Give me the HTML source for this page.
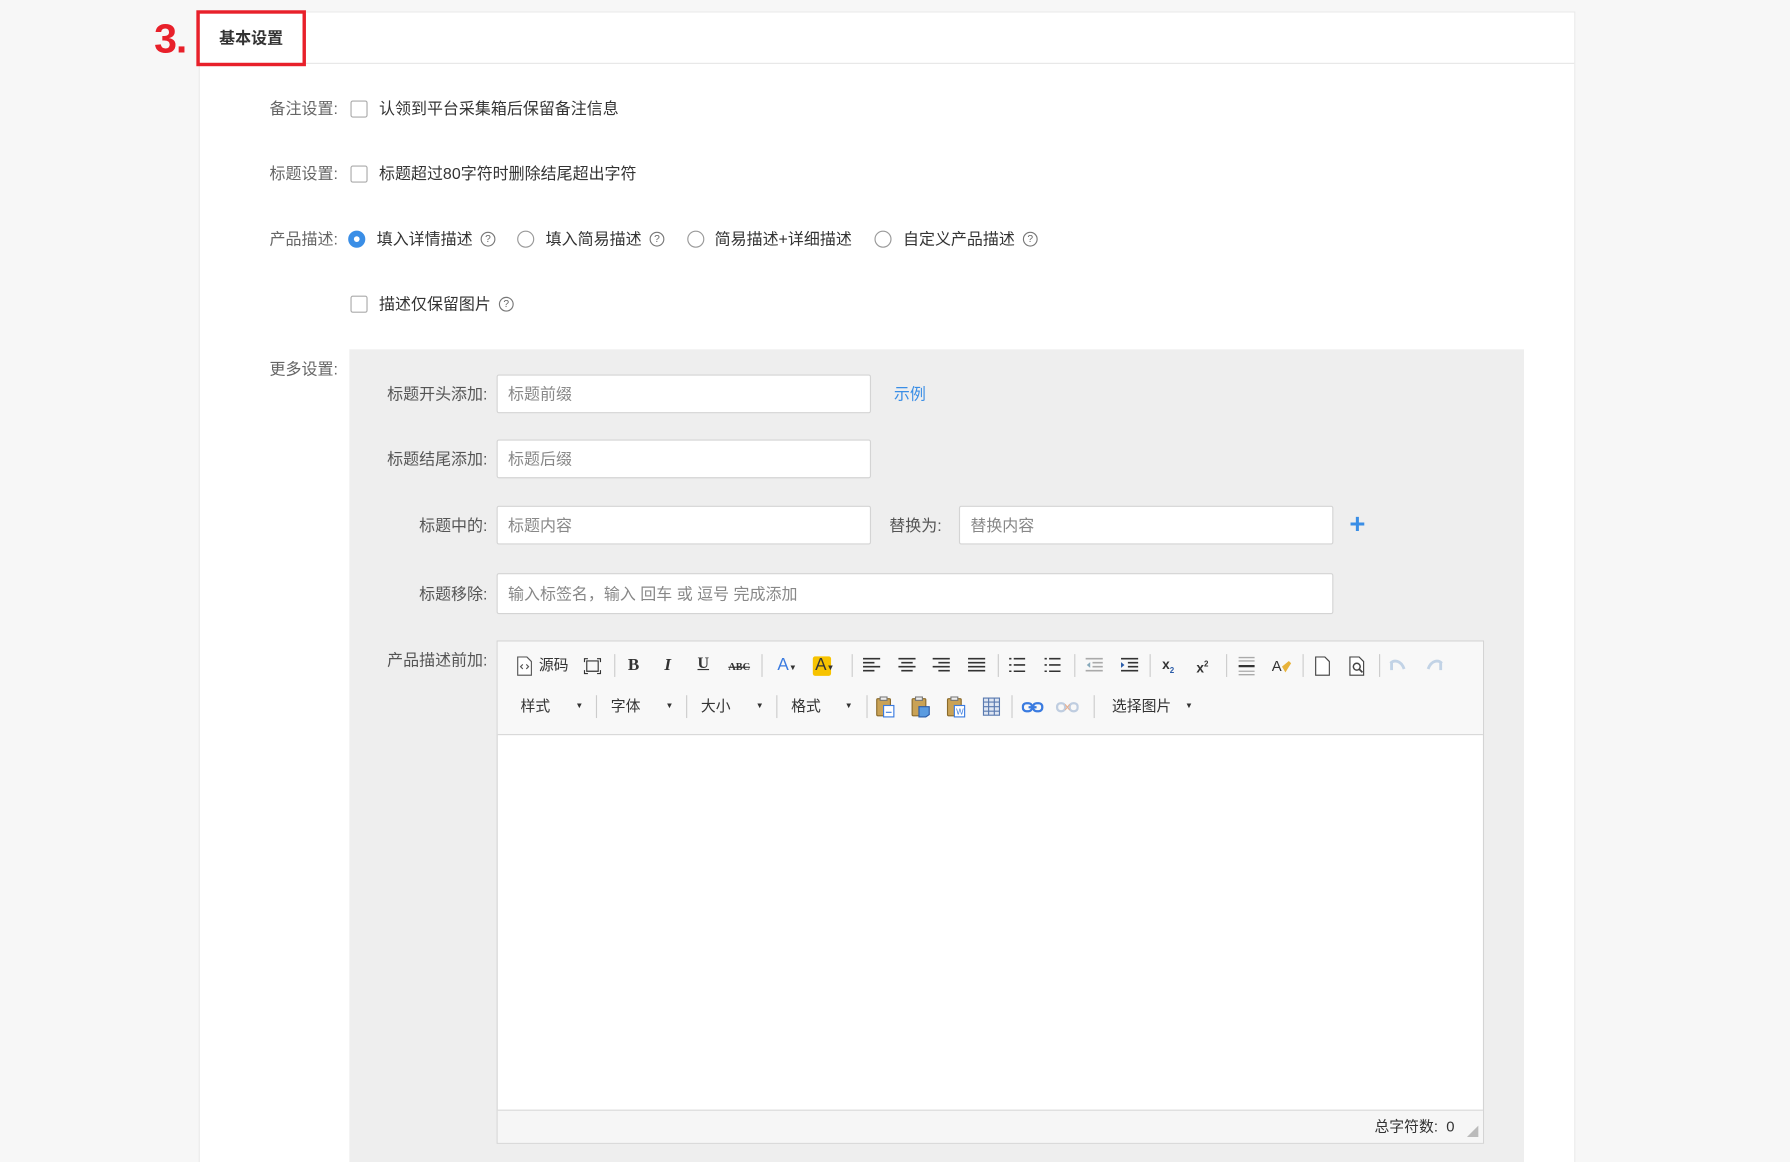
<!DOCTYPE html>
<html><head><meta charset="utf-8"><style>
html,body{margin:0;padding:0;width:1790px;height:1162px;overflow:hidden;background:#f7f7f7}
#w{position:absolute;left:0;top:0;width:1568px;height:1018px;overflow:hidden;transform:scale(1.14158);transform-origin:0 0;font-family:"Liberation Sans","Noto Sans CJK SC",sans-serif;font-size:14px;color:#333}
.a{position:absolute;white-space:nowrap}
.card{left:174px;top:10px;width:1204px;height:1100px;background:#fff;border:1px solid #eaeaea}
.hl{left:174px;top:55px;width:1205px;height:1px;background:#e6e6e6}
.lab{color:#666;text-align:right;width:120px;line-height:20px}
.cb{width:13px;height:13px;border:1px solid #aaa;border-radius:2px;background:#fff}
.rd{width:13px;height:13px;border:1px solid #999;border-radius:50%;background:#fff}
.q{width:11px;height:11px;border:1px solid #777;border-radius:50%;font-size:9px;line-height:11px;text-align:center;color:#666}
.t{line-height:20px}
.inp{background:#fff;border:1px solid #d4d4d4;border-radius:2px;height:34px;box-sizing:border-box;color:#888;line-height:32px;padding-left:9px}
.ilab{color:#555;text-align:right;width:100px;line-height:20px}
.tb{font-size:13px;color:#333;line-height:20px;text-align:center}
.sep{width:1px;height:20px;background:#ccc}
.ic{position:absolute}
</style></head><body><div id="w">
<div class="a card"></div>
<div class="a hl"></div>
<div class="a" style="left:135px;top:12px;font-size:36px;font-weight:bold;color:#e8202a;line-height:44px;letter-spacing:-1px">3.</div>
<div class="a" style="left:172px;top:9px;width:90px;height:43px;border:3px solid #e8202a"></div>
<div class="a" style="left:192px;top:23px;font-weight:bold;line-height:20px;font-size:14px">基本设置</div>

<div class="a lab" style="left:176px;top:85px">备注设置:</div>
<div class="a cb" style="left:307px;top:88px"></div>
<div class="a t" style="left:332px;top:85px">认领到平台采集箱后保留备注信息</div>

<div class="a lab" style="left:176px;top:142px">标题设置:</div>
<div class="a cb" style="left:307px;top:145px"></div>
<div class="a t" style="left:332px;top:142px">标题超过80字符时删除结尾超出字符</div>

<div class="a lab" style="left:176px;top:199px">产品描述:</div>
<div class="a rd" style="left:305px;top:202px;background:#3a8ee6;border-color:#3a8ee6"><div style="position:absolute;left:4px;top:4px;width:5px;height:5px;border-radius:50%;background:#fff"></div></div>
<div class="a t" style="left:330px;top:199px">填入详情描述</div>
<div class="a q" style="left:421px;top:203px">?</div>
<div class="a rd" style="left:453px;top:202px"></div>
<div class="a t" style="left:478px;top:199px">填入简易描述</div>
<div class="a q" style="left:569px;top:203px">?</div>
<div class="a rd" style="left:602px;top:202px"></div>
<div class="a t" style="left:626px;top:199px">简易描述+详细描述</div>
<div class="a rd" style="left:766px;top:202px"></div>
<div class="a t" style="left:791px;top:199px">自定义产品描述</div>
<div class="a q" style="left:896px;top:203px">?</div>

<div class="a cb" style="left:307px;top:259px"></div>
<div class="a t" style="left:332px;top:256px">描述仅保留图片</div>
<div class="a q" style="left:437px;top:260px">?</div>

<div class="a lab" style="left:176px;top:313px">更多设置:</div>
<div class="a" style="left:306px;top:306px;width:1029px;height:780px;background:#eeeeee"></div>

<div class="a ilab" style="left:327px;top:335px">标题开头添加:</div>
<div class="a inp" style="left:435px;top:328px;width:328px">标题前缀</div>
<div class="a t" style="left:783px;top:335px;color:#3a8ee6">示例</div>

<div class="a ilab" style="left:327px;top:392px">标题结尾添加:</div>
<div class="a inp" style="left:435px;top:385px;width:328px">标题后缀</div>

<div class="a ilab" style="left:327px;top:450px">标题中的:</div>
<div class="a inp" style="left:435px;top:443px;width:328px">标题内容</div>
<div class="a t" style="left:779px;top:450px;color:#555">替换为:</div>
<div class="a inp" style="left:840px;top:443px;width:328px">替换内容</div>
<div class="a" style="left:1182px;top:444px;font-size:24px;font-weight:bold;color:#3a8ee6;line-height:32px">+</div>

<div class="a ilab" style="left:327px;top:510px">标题移除:</div>
<div class="a inp" style="left:435px;top:502px;width:733px;height:36px;line-height:34px">输入标签名，输入 回车 或 逗号 完成添加</div>

<div class="a ilab" style="left:327px;top:568px">产品描述前加:</div>
<div class="a" style="left:435px;top:561px;width:865px;height:441px;border:1px solid #d4d4d4;background:#fff;box-sizing:border-box"></div>
<div class="a" style="left:436px;top:562px;width:863px;height:81px;background:#f8f8f8;border-bottom:1px solid #d8d8d8"></div>
<div class="a" style="left:436px;top:972px;width:863px;height:28px;background:#f6f6f6;border-top:1px solid #d8d8d8"></div>
<div class="a" style="left:1204px;top:978px;font-size:13px;line-height:18px">总字符数:&nbsp; 0</div>
<div class="a" style="left:1285px;top:986px;width:0;height:0;border-left:10px solid transparent;border-bottom:10px solid #bbb"></div>

<!-- toolbar row 1 -->
<svg class="ic" style="left:452px;top:575px" width="14" height="17"><path d="M1.5 .5h8l4 4v12h-12z" fill="#fff" stroke="#555"/><path d="M6 7l-2 2 2 2M9 7l2 2-2 2" stroke="#555" fill="none"/></svg>
<div class="a tb" style="left:472px;top:573px">源码</div>
<svg class="ic" style="left:511px;top:576px" width="16" height="15"><path d="M1 4V1h3M12 1h3v3M15 11v3h-3M4 14H1v-3M3 3h10v9H3z" stroke="#333" fill="none"/></svg>
<div class="a sep" style="left:538px;top:573px"></div>
<div class="a tb" style="left:550px;top:573px;font-weight:bold;font-family:'Liberation Serif',serif;font-size:15px">B</div>
<div class="a tb" style="left:582px;top:573px;font-weight:bold;font-style:italic;font-family:'Liberation Serif',serif;font-size:15px">I</div>
<div class="a tb" style="left:611px;top:572px;font-weight:bold;font-family:'Liberation Serif',serif;font-size:14px;text-decoration:underline">U</div>
<div class="a tb" style="left:638px;top:574px;font-weight:bold;font-size:9px;font-family:'Liberation Serif',serif;text-decoration:line-through">ABC</div>
<div class="a sep" style="left:667px;top:573px"></div>
<div class="a tb" style="left:681px;top:573px;color:#3a7be0;font-size:15px">A<span style="font-size:7px;color:#333">▼</span></div>
<div class="a" style="left:712px;top:575px;width:16px;height:17px;background:#f7c300;border-radius:2px"></div>
<div class="a tb" style="left:714px;top:573px;font-size:15px">A<span style="font-size:7px">▼</span></div>
<div class="a sep" style="left:746px;top:573px"></div>
<svg class="ic" style="left:755px;top:576px" width="110" height="14" stroke="#333" stroke-width="1.4">
<path d="M1 1h15M1 4.5h10M1 8h15M1 11.5h10"/>
<path d="M32 1h15M34.5 4.5h10M32 8h15M34.5 11.5h10"/>
<path d="M62 1h15M67 4.5h10M62 8h15M67 11.5h10"/>
<path d="M93 1h15M93 4.5h15M93 8h15M93 11.5h15"/></svg>
<div class="a sep" style="left:874px;top:573px"></div>
<svg class="ic" style="left:883px;top:576px" width="50" height="14" stroke="#333" stroke-width="1.4">
<path d="M1 1h2M1 6.5h2M1 12h2M5 1h10M5 6.5h10M5 12h10"/>
<path d="M32 1h2M32 6.5h2M32 12h2M36 1h10M36 6.5h10M36 12h10"/></svg>
<div class="a sep" style="left:941px;top:573px"></div>
<svg class="ic" style="left:950px;top:576px" width="50" height="15" stroke-width="1.4">
<path d="M1 1h15M7 4.5h9M7 8h9M1 11.5h15" stroke="#aaa"/><path d="M5 4l-3 2.5 3 2.5z" fill="#8ab" stroke="none"/>
<path d="M32 1h15M38 4.5h9M38 8h9M32 11.5h15" stroke="#333"/><path d="M32 4l3 2.5-3 2.5z" fill="#2a5ba8" stroke="none"/></svg>
<div class="a sep" style="left:1007px;top:573px"></div>
<div class="a tb" style="left:1018px;top:572px;font-weight:bold;font-size:12px">x<sub style="font-size:7px;color:#2a5ba8">2</sub></div>
<div class="a tb" style="left:1048px;top:573px;font-weight:bold;font-size:12px">x<sup style="font-size:7px">2</sup></div>
<div class="a sep" style="left:1074px;top:573px"></div>
<svg class="ic" style="left:1084px;top:575px" width="16" height="17" stroke-width="1.2"><path d="M1 1h14M1 4h14M1 13h14M1 16h14" stroke="#aaa"/><path d="M1 8.5h14" stroke="#333" stroke-width="2"/></svg>
<svg class="ic" style="left:1114px;top:575px" width="18" height="17"><text x="0" y="13" font-size="13" fill="#333" font-family="Liberation Sans">A</text><path d="M9 9l6-5 2 2-5 8z" fill="#e8b33a"/></svg>
<div class="a sep" style="left:1141px;top:573px"></div>
<svg class="ic" style="left:1151px;top:575px" width="14" height="17"><path d="M1.5 .5h8l4 4v12h-12z" fill="#fff" stroke="#444"/></svg>
<svg class="ic" style="left:1181px;top:575px" width="16" height="17"><path d="M1.5 .5h8l4 4v12h-12z" fill="#fff" stroke="#444"/><circle cx="7.5" cy="9" r="3" fill="none" stroke="#444" stroke-width="1.3"/><path d="M9.5 11l3 3" stroke="#444" stroke-width="1.5"/></svg>
<div class="a sep" style="left:1208px;top:573px"></div>
<svg class="ic" style="left:1216px;top:577px" width="50" height="12" fill="none" stroke="#c2d3e6" stroke-width="2.5"><path d="M3 10V3M2 4c3-3 9-3 12 5"/><path d="M46 10V3M47 4c-3-3-9-3-12 5"/></svg>

<!-- row 2 -->
<div class="a tb" style="left:456px;top:609px">样式</div><div class="a" style="left:504px;top:609px;font-size:7px;line-height:20px">▼</div>
<div class="a sep" style="left:522px;top:609px"></div>
<div class="a tb" style="left:535px;top:609px">字体</div><div class="a" style="left:583px;top:609px;font-size:7px;line-height:20px">▼</div>
<div class="a sep" style="left:601px;top:609px"></div>
<div class="a tb" style="left:614px;top:609px">大小</div><div class="a" style="left:662px;top:609px;font-size:7px;line-height:20px">▼</div>
<div class="a sep" style="left:680px;top:609px"></div>
<div class="a tb" style="left:693px;top:609px">格式</div><div class="a" style="left:740px;top:609px;font-size:7px;line-height:20px">▼</div>
<div class="a sep" style="left:759px;top:609px"></div>
<svg class="ic" style="left:767px;top:610px" width="110" height="19">
<g><rect x="1" y="2" width="12" height="15" rx="1" fill="#c9a256" stroke="#8a6a2a"/><rect x="4" y="0.5" width="6" height="3" fill="#eee" stroke="#777"/><rect x="7" y="8" width="9" height="10" fill="#fff" stroke="#3a7be0"/><path d="M9 14h5" stroke="#3a7be0"/></g>
<g transform="translate(31 0)"><rect x="1" y="2" width="12" height="15" rx="1" fill="#c9a256" stroke="#8a6a2a"/><rect x="4" y="0.5" width="6" height="3" fill="#eee" stroke="#777"/><path d="M7 9h9v7l-3 2H7z" fill="#5a9be0" stroke="#2a5ba8"/></g>
<g transform="translate(62 0)"><rect x="1" y="2" width="12" height="15" rx="1" fill="#c9a256" stroke="#8a6a2a"/><rect x="4" y="0.5" width="6" height="3" fill="#eee" stroke="#777"/><rect x="7" y="8" width="9" height="10" fill="#fff" stroke="#3a7be0"/><text x="8.5" y="16" font-size="7" fill="#3a7be0">W</text></g>
<g transform="translate(94 1)"><rect x="0.5" y="0.5" width="14" height="15" fill="#dfe6f2" stroke="#5a7ab0"/><path d="M0.5 4h14M0.5 8h14M0.5 12h14M5 0.5v15M10 0.5v15" stroke="#5a7ab0"/></g></svg>
<div class="a sep" style="left:886px;top:609px"></div>
<svg class="ic" style="left:895px;top:614px" width="50" height="12" fill="none" stroke-width="2"><rect x="1" y="2" width="8" height="7" rx="3" stroke="#3a7be0"/><rect x="10" y="2" width="8" height="7" rx="3" stroke="#3a7be0"/><path d="M6 5.5h7" stroke="#3a7be0"/>
<rect x="31" y="2" width="7" height="7" rx="3" stroke="#bfcde0"/><rect x="42" y="2" width="7" height="7" rx="3" stroke="#bfcde0"/><path d="M38 3l4 5M42 3l-4 5" stroke="#e8b090" stroke-width="1"/></svg>
<div class="a sep" style="left:958px;top:609px"></div>
<div class="a tb" style="left:974px;top:609px">选择图片</div><div class="a" style="left:1038px;top:609px;font-size:7px;line-height:20px">▼</div>
</div></body></html>
